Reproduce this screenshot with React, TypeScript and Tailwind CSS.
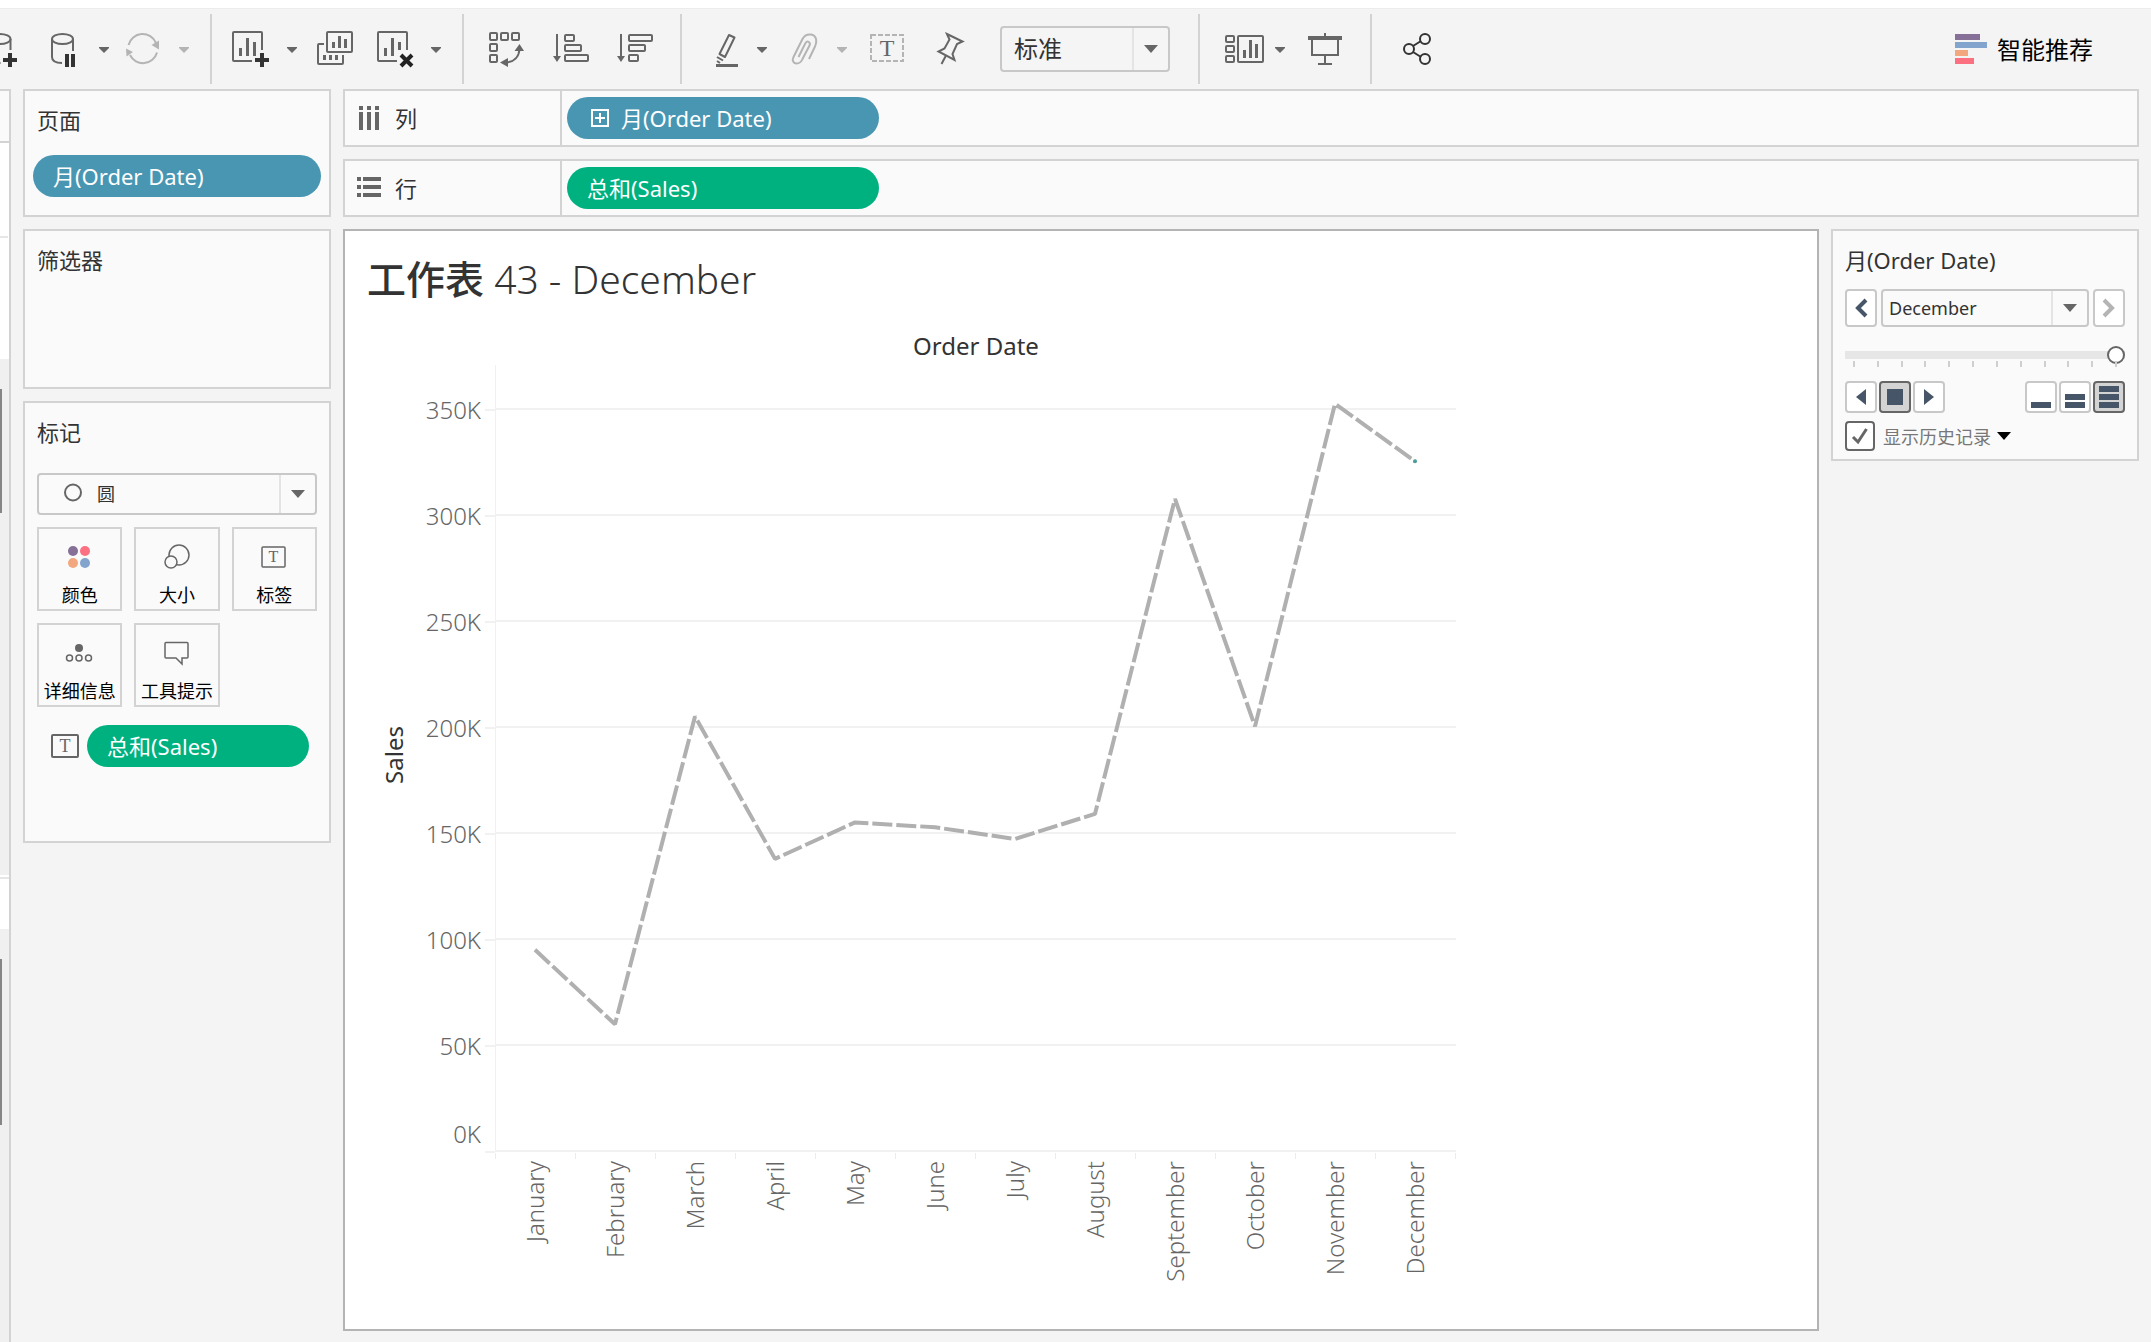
import { useState } from 'react';
import type { ReactNode } from 'react';
import clsx from 'clsx';

const sales = [
  { month: 'January', value: 94.9 },
  { month: 'February', value: 59.8 },
  { month: 'March', value: 205 },
  { month: 'April', value: 137.8 },
  { month: 'May', value: 155 },
  { month: 'June', value: 152.7 },
  { month: 'July', value: 147.2 },
  { month: 'August', value: 159 },
  { month: 'September', value: 307.6 },
  { month: 'October', value: 200.3 },
  { month: 'November', value: 352.5 },
  { month: 'December', value: 325.3 },
];

interface ToolButtonProps {
  label: string;
  className?: string;
  children: ReactNode;
}

const ToolButton = ({ label, className, children }: ToolButtonProps) => (
  <button aria-label={label} className={clsx('shrink-0 text-[#666]', className)}>
    <svg width="40" height="40" viewBox="0 0 40 40" fill="none" stroke="currentColor" strokeWidth="2">
      {children}
    </svg>
  </button>
);

const CaretButton = ({ label, className }: { label: string; className?: string }) => (
  <button aria-label={label} className={clsx('shrink-0', className)}>
    <svg width="20" height="40" viewBox="0 0 20 40" fill="currentColor">
      <path d="M5 18h10v1l-5 5-5-5z" />
    </svg>
  </button>
);

const Separator = ({ className }: { className?: string }) => (
  <div className={clsx('h-[70px] w-0.5 shrink-0 bg-[#d3d3d3]', className)} />
);

const DownCaret = ({ className }: { className?: string }) => (
  <svg className={className} width="14" height="8" viewBox="0 0 14 8" fill="currentColor">
    <path d="M0 0h14L7 8z" />
  </svg>
);

interface DropDownProps {
  label: string;
  value: string;
  options: string[];
  onChange?: (value: string) => void;
  className?: string;
  selectClassName?: string;
  icon?: ReactNode;
}

const DropDown = ({ label, value, options, onChange, className, selectClassName, icon }: DropDownProps) => (
  <div className={clsx('relative', className)}>
    <select
      aria-label={label}
      value={value}
      onChange={(e) => onChange?.(e.target.value)}
      className={clsx('h-full w-full appearance-none rounded-sm border-2 border-[#c8c8c8] text-[#333]', selectClassName)}
    >
      {options.map((option) => (
        <option key={option}>{option}</option>
      ))}
    </select>
    {icon}
    <div className="pointer-events-none absolute inset-y-0.5 right-0.5 flex w-9 items-center justify-center border-l-2 border-[#e4e4e4] text-[#666]">
      <DownCaret />
    </div>
  </div>
);

const Pill = ({ color, className, children }: { color: 'blue' | 'green'; className?: string; children: ReactNode }) => (
  <button
    className={clsx(
      'flex h-[42px] items-center gap-3 rounded-full px-5 text-[22px] leading-7 text-white',
      color === 'blue' ? 'bg-[#4996b2]' : 'bg-[#00b180]',
      className
    )}
  >
    {children}
  </button>
);

const Card = ({ title, className, children }: { title: string; className?: string; children?: ReactNode }) => (
  <section className={clsx('border-2 border-[#d3d3d3] bg-[#fafafa] pt-[15px]', className)}>
    <h2 className="mb-px px-3 text-[22px] leading-7 text-[#333]">{title}</h2>
    {children}
  </section>
);

const MarkButton = ({ label, children }: { label: string; children: ReactNode }) => (
  <button className="flex h-[84px] flex-col items-center border-2 border-[#d3d3d3] bg-[#fafafa] pt-3 text-lg leading-6 whitespace-nowrap text-black">
    <svg className="mb-2.5 shrink-0" width="32" height="32" viewBox="0 0 32 32" fill="none" stroke="#666" strokeWidth="1.5">
      {children}
    </svg>
    {label}
  </button>
);

const Shelf = ({ label, icon, children }: { label: string; icon: ReactNode; children: ReactNode }) => (
  <div className="flex h-[58px] border-2 border-[#d3d3d3] bg-[#fafafa]">
    <div className="flex w-[217px] items-center gap-3 border-r-2 border-[#d3d3d3] pl-3 text-[22px] leading-7 text-[#333]">
      <svg width="26" height="26" viewBox="0 0 26 26" fill="#666">
        {icon}
      </svg>
      {label}
    </div>
    <div className="flex flex-1 items-center pl-[5px]">{children}</div>
  </div>
);

const Toolbar = () => {
  const [fit, setFit] = useState('标准');

  return (
    <header className="flex h-[81px] items-center overflow-hidden border-t border-[#ececec]">
      <ToolButton label="新建数据源" className="-ml-5">
        <ellipse cx="20" cy="10" rx="10.5" ry="5" />
        <path d="M9.5 10v18c0 4 5 6 11 6M30.5 10v11" />
        <path d="M30 24v14M23 31h14" stroke="#333" strokeWidth="4" />
      </ToolButton>
      <ToolButton label="暂停自动更新" className="ml-5">
        <ellipse cx="22.5" cy="10" rx="10.5" ry="5" />
        <path d="M12 10v18c0 4 4 6 10 6M33 10v12" />
        <path d="M27 25v13M33 25v13" stroke="#333" strokeWidth="4" />
      </ToolButton>
      <CaretButton label="更新选项" className="ml-3.5 text-[#666]" />
      <ToolButton label="运行更新" className="ml-2 text-[#b4b4b4]!">
        <path d="M6.5 16A14.5 14.5 0 0 1 34 14M35 23.500A14.500 14.500 0 0 1 8 26" />
        <path d="M29.500 16L37 11.500v9zM4 19.500l7 3.500-6.500 4.500z" fill="currentColor" stroke="none" />
      </ToolButton>
      <CaretButton label="运行选项" className="ml-3 text-[#b4b4b4]" />
      <Separator className="ml-4" />

      <ToolButton label="新建工作表" className="ml-5">
        <path d="M20 32H2a1 1 0 0 1-1-1V4a1 1 0 0 1 1-1h27a1 1 0 0 1 1 1v17" />
        <path d="M8.500 19v8M15.500 9v18M22.500 13v14" strokeWidth="3" />
        <path d="M30 24v14M23 31h14" stroke="#333" strokeWidth="4" />
      </ToolButton>
      <CaretButton label="新建选项" className="ml-2.5 text-[#666]" />
      <ToolButton label="复制工作表" className="ml-3">
        <rect x="13" y="3" width="25" height="20" rx="1" />
        <path d="M19.500 13v6M25.500 7v12M31.500 10v9" strokeWidth="3" />
        <path d="M10 15H5a1 1 0 0 0-1 1v18a1 1 0 0 0 1 1h23a1 1 0 0 0 1-1v-8" />
        <path d="M10.500 26v5M16.500 26v5M22.500 26v5" strokeWidth="3" />
      </ToolButton>
      <ToolButton label="清除工作表" className="ml-5">
        <path d="M23 32H5a1 1 0 0 1-1-1V4a1 1 0 0 1 1-1h27a1 1 0 0 1 1 1v17" />
        <path d="M11.500 19v8M18.500 9v18M25.500 13v8" strokeWidth="3" />
        <path d="M27 26l11 11M38 26L27 37" stroke="#222" strokeWidth="4" />
      </ToolButton>
      <CaretButton label="清除选项" className="ml-3 text-[#666]" />
      <Separator className="ml-4" />

      <ToolButton label="交换行和列" className="ml-6">
        <rect x="2" y="4" width="7" height="7" rx="1" />
        <rect x="13" y="4" width="7" height="7" rx="1" />
        <rect x="24" y="4" width="7" height="7" rx="1" />
        <rect x="2" y="15" width="7" height="7" rx="1" />
        <rect x="2" y="26" width="7" height="7" rx="1" />
        <path d="M18 33.500C26 33 31 28 31.500 20" />
        <path d="M31.500 15l-5 7h9.500zM12 33.500l8-4.500v9z" fill="currentColor" stroke="none" />
      </ToolButton>
      <ToolButton label="升序排序" className="ml-6">
        <path d="M5 5v23" />
        <path d="M1 27h8l-4 6z" fill="currentColor" stroke="none" />
        <rect x="13" y="6" width="9" height="6" rx="1" />
        <rect x="13" y="16" width="16" height="6" rx="1" />
        <rect x="13" y="26" width="23" height="6" rx="1" />
      </ToolButton>
      <ToolButton label="降序排序" className="ml-6">
        <path d="M5 5v23" />
        <path d="M1 27h8l-4 6z" fill="currentColor" stroke="none" />
        <rect x="13" y="6" width="23" height="6" rx="1" />
        <rect x="13" y="16" width="16" height="6" rx="1" />
        <rect x="13" y="26" width="9" height="6" rx="1" />
      </ToolButton>
      <Separator className="ml-6" />

      <ToolButton label="突出显示" className="ml-6">
        <path d="M23 6l5.500 2.500L19 28l-5.500-3z" strokeLinejoin="round" />
        <path d="M11 28l6 3.500M11 32l3 2" />
        <path d="M10 36.500h22" strokeWidth="3" />
      </ToolButton>
      <CaretButton label="突出显示选项" className="ml-1.5 text-[#666]" />
      <ToolButton label="组成员" className="ml-3 text-[#b4b4b4]!">
        <path d="M25 30l6-12.500C34 10 31 6 27 5.500 23 5 20 7 18.500 10l-9 18c-2 4 0.500 6.500 3 6.500 3.500 0 5-2 6-4.500l7-13.500c1.500-3-2-5.500-4-2.500l-7 14" />
      </ToolButton>
      <CaretButton label="组选项" className="ml-2 text-[#b4b4b4]" />
      <ToolButton label="显示标记标签" className="ml-4">
        <rect x="3" y="6" width="32" height="26" stroke="#b4b4b4" strokeDasharray="5 2" />
        <text x="19" y="27" textAnchor="middle" fill="#666" stroke="none" className="font-['Liberation_Serif',serif] text-2xl">
          T
        </text>
      </ToolButton>
      <ToolButton label="固定轴" className="ml-6">
        <path d="M15 5l15.500 7.500L25 15l-4.500 10 2 6L6.500 22.500l6-3 5-9z" />
        <path d="M14 26.500L9.500 35" />
      </ToolButton>
      <DropDown
        label="适合"
        value={fit}
        options={['标准', '适合宽度', '适合高度', '整个视图']}
        onChange={setFit}
        className="ml-7 h-[46px] w-[170px] shrink-0"
        selectClassName="bg-[#f5f5f5] pl-3 text-2xl"
      />
      <Separator className="ml-7" />

      <ToolButton label="显示/隐藏卡" className="ml-6">
        <rect x="2" y="7" width="8" height="6" rx="1" />
        <rect x="2" y="17" width="8" height="6" rx="1" />
        <rect x="2" y="27" width="8" height="6" rx="1" />
        <rect x="14" y="7" width="25" height="26" rx="1" />
        <path d="M20.500 21v8M26.500 11v18M32.500 15v14" strokeWidth="3" />
      </ToolButton>
      <CaretButton label="卡选项" className="ml-1.5 text-[#666]" />
      <ToolButton label="演示模式" className="ml-4">
        <path d="M2 9h34" strokeWidth="4" />
        <path d="M6 11v15h26V11M19 4v4M19 26v9M12 35h14" />
      </ToolButton>
      <Separator className="ml-6" />

      <ToolButton label="共享工作簿" className="ml-6">
        <g stroke="#333">
          <circle cx="13" cy="20" r="5" />
          <circle cx="29" cy="10" r="5" />
          <circle cx="29" cy="30" r="5" />
          <path d="M17 17l8-5M17 23l8 5" />
        </g>
      </ToolButton>

      <button className="mr-[58px] ml-auto flex shrink-0 items-center gap-2.5 text-2xl text-black">
        <svg width="32" height="30" viewBox="0 0 32 30">
          <rect width="25" height="6" fill="#877097" />
          <rect y="8" width="32" height="6" fill="#83a4cc" />
          <rect y="16" width="13" height="6" fill="#f3a77e" />
          <rect y="24" width="19" height="6" fill="#fb7182" />
        </svg>
        <span className="pt-0.5">智能推荐</span>
      </button>
    </header>
  );
};

// The edge of the data pane, which continues past the left side of the window
const DataPaneEdge = () => (
  <div className="flex w-[11px] shrink-0 flex-col border-r-2 border-[#d3d3d3] bg-white">
    <div className="h-[54px] border-y-2 border-[#d3d3d3] bg-[#fafafa]" />
    <div className="mr-px h-[95px] border-b-2 border-[#e6e6e6]" />
    <div className="h-[121px]" />
    <div className="h-[516px] bg-[#f0f0f0] pt-[30px]">
      <div className="h-[124px] w-0.5 bg-[#868686]" />
    </div>
    <div className="h-1 border-b-2 border-[#e6e6e6]" />
    <div className="h-[50px]" />
    <div className="flex-1 bg-[#f0f0f0] pt-[30px]">
      <div className="h-[166px] w-0.5 bg-[#868686]" />
    </div>
  </div>
);

const Sidebar = () => {
  const [mark, setMark] = useState('圆');

  return (
    <aside className="flex w-[308px] shrink-0 flex-col gap-3">
      <Card title="页面" className="h-32">
        <div className="px-2 pt-5">
          <Pill color="blue" className="w-full">月(Order Date)</Pill>
        </div>
      </Card>

      <Card title="筛选器" className="h-40" />

      <Card title="标记" className="h-[442px]">
        <div className="px-3 pt-[26px]">
          <DropDown
            label="标记类型"
            value={mark}
            options={['圆', '自动', '条形图', '线', '形状']}
            onChange={setMark}
            className="h-[42px]"
            selectClassName="bg-[#fafafa] pl-[58px] text-lg"
            icon={
              <svg className="pointer-events-none absolute top-2.5 left-[26px]" width="20" height="20" viewBox="0 0 20 20" fill="none" stroke="#666" strokeWidth="2">
                <circle cx="10" cy="9.5" r="8" />
              </svg>
            }
          />

          <div className="mt-3 grid grid-cols-3 gap-3">
            <MarkButton label="颜色">
              <g stroke="none">
                <circle cx="9" cy="10" r="5" fill="#877097" />
                <circle cx="21" cy="10" r="5" fill="#fb7182" />
                <circle cx="9" cy="22" r="5" fill="#f3a77e" />
                <circle cx="21" cy="22" r="5" fill="#83a4cc" />
              </g>
            </MarkButton>
            <MarkButton label="大小">
              <circle cx="18" cy="14" r="10" />
              <circle cx="10" cy="21" r="6" fill="#fafafa" />
            </MarkButton>
            <MarkButton label="标签">
              <rect x="4" y="6" width="23" height="20" rx="1" />
              <text x="15.5" y="21" textAnchor="middle" fill="#666" stroke="none" className="font-['Liberation_Serif',serif] text-base">
                T
              </text>
            </MarkButton>
            <MarkButton label="详细信息">
              <circle cx="15" cy="11" r="4" fill="#666" stroke="none" />
              <circle cx="5.5" cy="21" r="3" />
              <circle cx="15" cy="21" r="3" />
              <circle cx="24.5" cy="21" r="3" />
            </MarkButton>
            <MarkButton label="工具提示">
              <path d="M5 5.500h21a1 1 0 0 1 1 1V20a1 1 0 0 1-1 1h-5v6l-6-6H5a1 1 0 0 1-1-1V6.500a1 1 0 0 1 1-1z" />
            </MarkButton>
          </div>

          <div className="mt-[18px] flex items-center gap-2 pr-2 pl-3.5">
            <svg className="shrink-0" width="28" height="24" viewBox="0 0 28 24" fill="none" stroke="#666" strokeWidth="2">
              <rect x="1" y="1" width="26" height="22" rx="1" />
              <text x="14" y="18" textAnchor="middle" fill="#666" stroke="none" className="font-['Liberation_Serif',serif] text-lg">
                T
              </text>
            </svg>
            <Pill color="green" className="flex-1">总和(Sales)</Pill>
          </div>
        </div>
      </Card>
    </aside>
  );
};

const bandWidth = 80;
const plotLeft = 128;
const plotTop = 44;
const plotRight = plotLeft + bandWidth * sales.length;
const zeroY = 830;
const ticks = [0, 50, 100, 150, 200, 250, 300, 350];

const xOf = (index: number) => plotLeft + bandWidth * (index + 0.5);
const yOf = (value: number) => zeroY - (value * 106) / 50;

const SalesChart = () => {
  const last = sales.length - 1;
  const points = sales.map((d, i) => `${xOf(i)},${yOf(d.value)}`).join(' ');

  return (
    <svg width="1110" height="980" viewBox="0 0 1110 980" className="text-2xl">
      <text x={(plotLeft + plotRight) / 2 + 1} y="34" textAnchor="middle" fill="#333">
        Order Date
      </text>
      <text transform="translate(36 434) rotate(-90)" textAnchor="middle" fill="#333">
        Sales
      </text>

      <path d={`M${plotLeft + 0.5} ${plotTop}V${zeroY}`} stroke="#f0f0f0" />
      {ticks.map((tick) => (
        <g key={tick}>
          <path d={`M${plotLeft} ${yOf(tick)}H${plotRight + 1}`} stroke="#f1f1f1" strokeWidth="2" />
          <path d={`M${plotLeft - 10} ${yOf(tick) + 1}h10`} stroke="#f1f1f1" strokeWidth="2" />
          <text x="114" y={tick === 0 ? zeroY - 8 : yOf(tick) + 10} textAnchor="end" fill="#666" className="font-light">
            {tick}K
          </text>
        </g>
      ))}

      {sales.map((d, i) => (
        <g key={d.month}>
          <path d={`M${plotLeft + bandWidth * i + 0.5} ${zeroY + 2}v6`} stroke="#ececec" />
          <text
            transform={`translate(${xOf(i) + 9} ${zeroY + 10}) rotate(-90)`}
            textAnchor="end"
            fill="#666"
            className="font-light"
          >
            {d.month}
          </text>
        </g>
      ))}
      <path d={`M${plotRight + 0.5} ${zeroY + 2}v6`} stroke="#ececec" />

      <polyline points={points} fill="none" stroke="#b0b0b0" strokeWidth="4" strokeLinejoin="bevel" strokeDasharray="20 4" />
      <circle cx={xOf(last)} cy={yOf(sales[last].value)} r="2" fill="#4a9d9c" />
    </svg>
  );
};

const squareButton = 'flex size-8 items-center justify-center rounded-sm border-2';

const PageControl = () => {
  const [page, setPage] = useState(sales.length - 1);
  const [showHistory, setShowHistory] = useState(true);
  const months = sales.map((d) => d.month);

  return (
    <Card title="月(Order Date)" className="h-[232px] w-[308px] shrink-0">
      <div className="px-3 pt-3.5">
        <div className="flex h-[38px] gap-1">
          <button
            aria-label="上一页"
            onClick={() => setPage(Math.max(0, page - 1))}
            className="flex w-8 items-center justify-center rounded-sm border-2 border-[#c8c8c8] bg-white text-[#475569]"
          >
            <svg width="14" height="20" viewBox="0 0 14 20" fill="none" stroke="currentColor" strokeWidth="4">
              <path d="M12 2l-8 8 8 8" />
            </svg>
          </button>
          <DropDown
            label="月(Order Date)"
            value={months[page]}
            options={months}
            onChange={(month) => setPage(months.indexOf(month))}
            className="w-[208px]"
            selectClassName="bg-[#fafafa] pl-1.5 text-lg"
          />
          <button
            aria-label="下一页"
            onClick={() => setPage(Math.min(months.length - 1, page + 1))}
            className="flex w-8 items-center justify-center rounded-sm border-2 border-[#c8c8c8] bg-white text-[#b4b4b4]"
          >
            <svg width="14" height="20" viewBox="0 0 14 20" fill="none" stroke="currentColor" strokeWidth="4">
              <path d="M2 2l8 8-8 8" />
            </svg>
          </button>
        </div>

        <input
          type="range"
          aria-label="页面"
          min={0}
          max={months.length - 1}
          value={page}
          onChange={(e) => setPage(Number(e.target.value))}
          className="mt-6 block h-2 w-full appearance-none bg-[#e6e6e6] [&::-webkit-slider-thumb]:size-[18px] [&::-webkit-slider-thumb]:appearance-none [&::-webkit-slider-thumb]:rounded-full [&::-webkit-slider-thumb]:border-2 [&::-webkit-slider-thumb]:border-[#666] [&::-webkit-slider-thumb]:bg-white"
        />
        <div className="mt-0.5 flex justify-between px-2">
          {months.map((month) => (
            <div key={month} className="h-1.5 w-0.5 bg-[#cfcfcf]" />
          ))}
        </div>

        <div className="mt-3.5 flex gap-0.5 text-[#475569]">
          <button aria-label="后退" className={clsx(squareButton, 'border-[#c8c8c8] bg-white')}>
            <svg width="10" height="16" viewBox="0 0 10 16" fill="currentColor">
              <path d="M10 0v16L0 8z" />
            </svg>
          </button>
          <button aria-label="停止" className={clsx(squareButton, 'border-[#666] bg-[#d4d4d4]')}>
            <svg width="16" height="16" viewBox="0 0 16 16" fill="currentColor">
              <rect width="16" height="16" />
            </svg>
          </button>
          <button aria-label="前进" className={clsx(squareButton, 'mr-auto border-[#c8c8c8] bg-white')}>
            <svg width="10" height="16" viewBox="0 0 10 16" fill="currentColor">
              <path d="M0 0v16l10-8z" />
            </svg>
          </button>
          <button aria-label="慢速" className={clsx(squareButton, 'border-[#c8c8c8] bg-white')}>
            <svg width="20" height="22" viewBox="0 0 20 22" fill="currentColor">
              <rect y="16" width="20" height="6" />
            </svg>
          </button>
          <button aria-label="中速" className={clsx(squareButton, 'border-[#c8c8c8] bg-white')}>
            <svg width="20" height="22" viewBox="0 0 20 22" fill="currentColor">
              <rect y="8" width="20" height="6" />
              <rect y="16" width="20" height="6" />
            </svg>
          </button>
          <button aria-label="快速" className={clsx(squareButton, 'border-[#666] bg-[#d4d4d4]')}>
            <svg width="20" height="22" viewBox="0 0 20 22" fill="currentColor">
              <rect width="20" height="6" />
              <rect y="8" width="20" height="6" />
              <rect y="16" width="20" height="6" />
            </svg>
          </button>
        </div>

        <div className="mt-2 flex items-center">
          <label className="flex items-center gap-2 text-lg leading-6 text-[#777]">
            <span className="relative size-[30px]">
              <input
                type="checkbox"
                checked={showHistory}
                onChange={(e) => setShowHistory(e.target.checked)}
                className="block size-full appearance-none rounded-sm border-2 border-[#666] bg-white"
              />
              {showHistory && (
                <svg className="pointer-events-none absolute top-1.5 left-1.5" width="18" height="18" viewBox="0 0 18 18" fill="none" stroke="#666" strokeWidth="3">
                  <path d="M2 10l5 5L15.500 2" />
                </svg>
              )}
            </span>
            <span className="pt-0.5">显示历史记录</span>
          </label>
          <button aria-label="历史记录选项" className="ml-1.5 text-black">
            <DownCaret />
          </button>
        </div>
      </div>
    </Card>
  );
};

const App = () => {
  return (
    <div className="flex min-h-screen flex-col bg-[#f4f4f4] font-['Noto_Sans','Noto_Sans_CJK_SC',sans-serif]">
      <div className="h-2 bg-white" />
      <Toolbar />
      <div className="flex flex-1">
        <DataPaneEdge />
        <div className="flex flex-1 gap-3 px-3 pb-[11px]">
          <Sidebar />
          <main className="flex min-w-0 flex-1 flex-col gap-3">
            <Shelf label="列" icon={<path d="M2 1h4v4H2zM2 7h4v18H2zM10 1h4v4h-4zM10 7h4v18h-4zM18 1h4v4h-4zM18 7h4v18h-4z" />}>
              <Pill color="blue" className="w-[312px] pl-6">
                <svg width="18" height="18" viewBox="0 0 18 18" fill="none" stroke="currentColor" strokeWidth="2">
                  <path d="M1 1h16v16H1zM9 4v10M4 9h10" />
                </svg>
                月(Order Date)
              </Pill>
            </Shelf>
            <Shelf label="行" icon={<path d="M0 2h4v4H0zM6 2h18v4H6zM0 10h4v4H0zM6 10h18v4H6zM0 18h4v4H0zM6 18h18v4H6z" />}>
              <Pill color="green" className="w-[312px]">总和(Sales)</Pill>
            </Shelf>

            <div className="flex flex-1 gap-3">
              <section className="min-w-0 flex-1 border-2 border-[#b4b4b4] bg-white pt-6 pl-[22px]">
                <h1 className="mb-[18px] text-[39px] leading-[48px] font-light text-[#333]">
                  <span className="font-medium">工作表</span> 43 - December
                </h1>
                <SalesChart />
              </section>
              <PageControl />
            </div>
          </main>
        </div>
      </div>
    </div>
  );
};

export default App;
